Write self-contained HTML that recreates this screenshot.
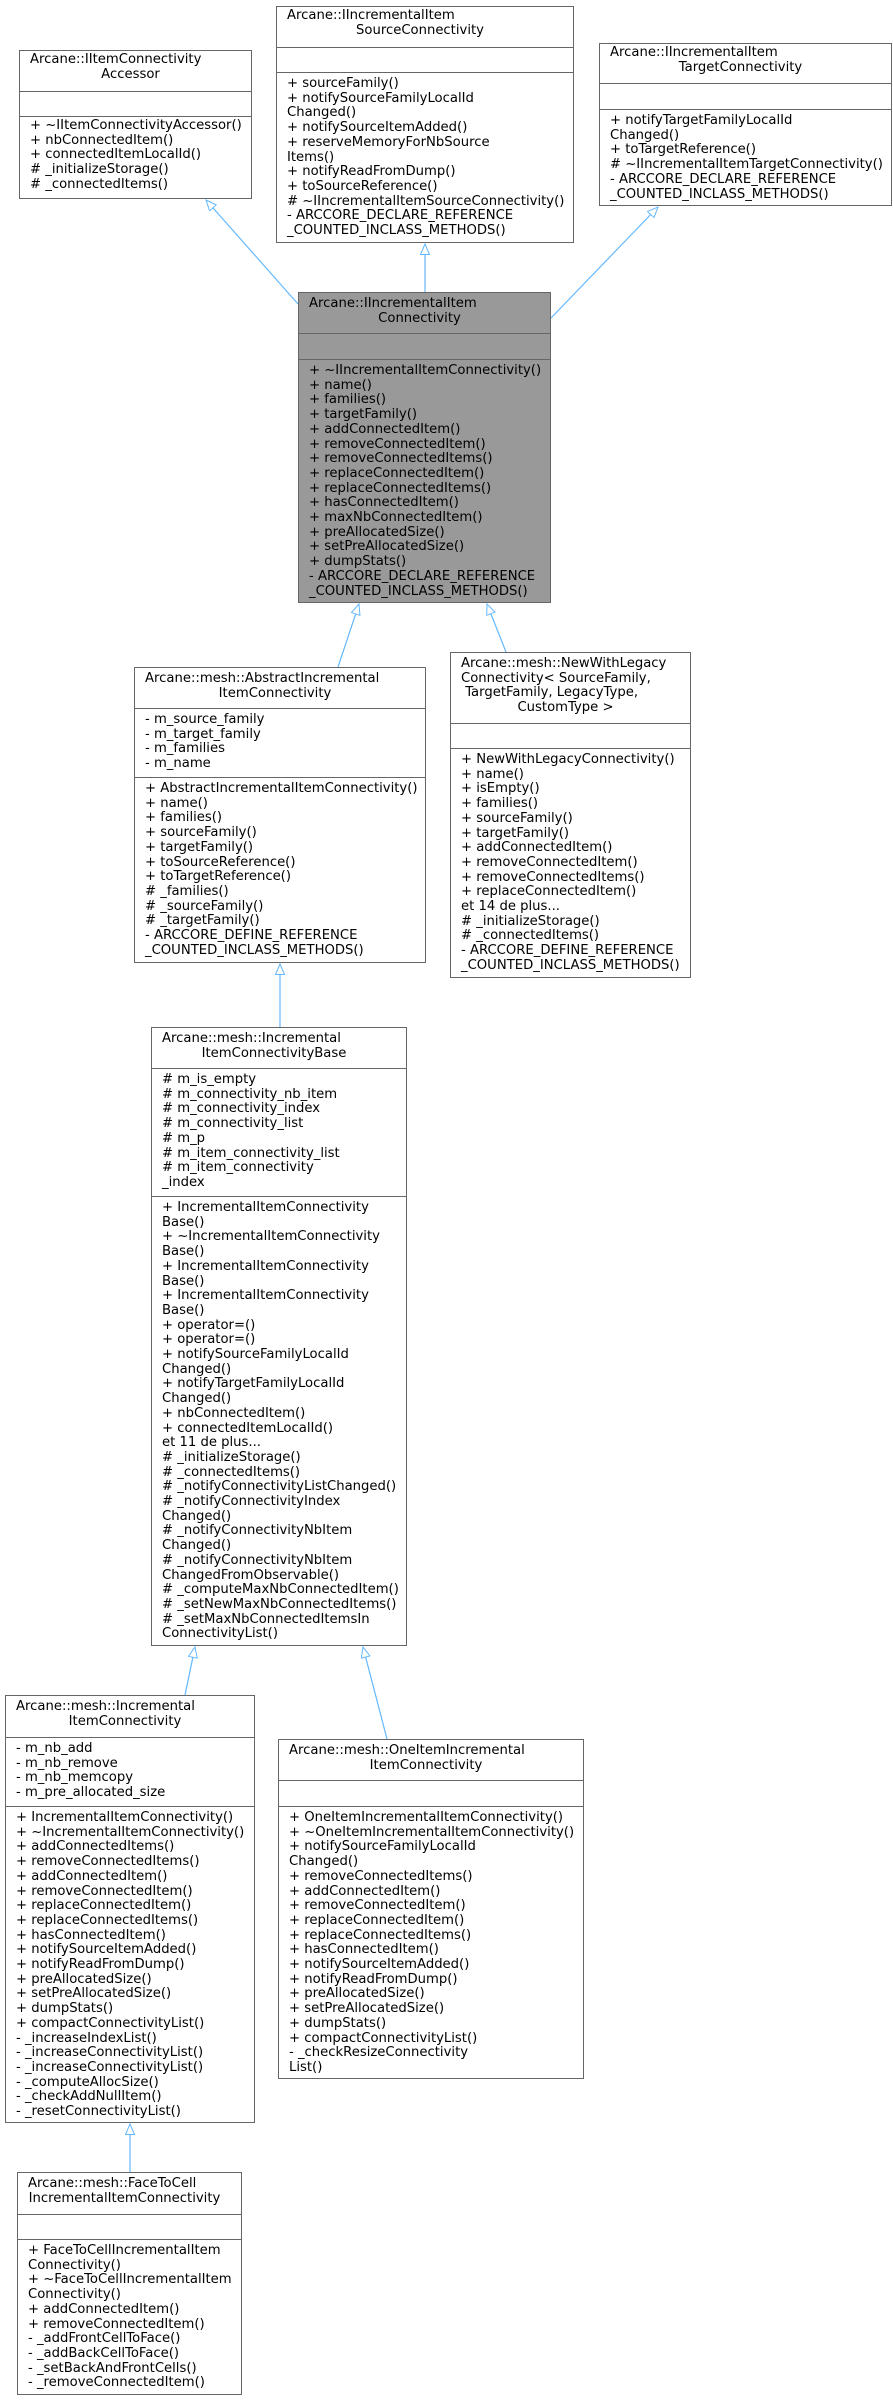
<!DOCTYPE html>
<html><head><meta charset="utf-8"><style>
body{margin:0;background:#fff;width:893px;height:2401px;position:relative;overflow:hidden;font-family:"DejaVu Sans","Liberation Sans",sans-serif;font-size:13.2px;color:#000}
.b{position:absolute;border:1px solid #666;box-sizing:border-box;background:#fff}
.b.g{background:#999}
.c{position:absolute;left:0;right:0;box-sizing:border-box;padding:2px 0 0 10px;line-height:14.7px;white-space:pre}
.c+.c{border-top:1px solid #666}
.ctr{text-align:center;padding-right:10px;margin-left:-10px}
svg{position:absolute;left:0;top:0}
</style></head><body>
<svg width="893" height="2401">
<defs><marker id="a" markerWidth="12" markerHeight="10" refX="11" refY="5" orient="auto" markerUnits="userSpaceOnUse"><path d="M0.5,0.5 L11,5 L0.5,9.5 Z" fill="#fff" stroke="#63b8ff" stroke-width="1"/></marker></defs>
<g stroke="#63b8ff" stroke-width="1.2" fill="none">
<line x1="298" y1="304" x2="206" y2="200" marker-end="url(#a)"/>
<line x1="425" y1="292" x2="425" y2="244" marker-end="url(#a)"/>
<line x1="551" y1="318" x2="658" y2="207" marker-end="url(#a)"/>
<line x1="338" y1="667" x2="359" y2="604" marker-end="url(#a)"/>
<line x1="506" y1="652" x2="487" y2="604" marker-end="url(#a)"/>
<line x1="280" y1="1027" x2="280" y2="964" marker-end="url(#a)"/>
<line x1="185" y1="1695" x2="195" y2="1647" marker-end="url(#a)"/>
<line x1="387" y1="1739" x2="363" y2="1647" marker-end="url(#a)"/>
<line x1="130" y1="2172" x2="130" y2="2124" marker-end="url(#a)"/>
</g></svg>

<div class="b" style="left:19px;top:50px;width:233px;height:149px">
<div class="c" style="top:0;height:40px">Arcane::IItemConnectivity
<div class="ctr">Accessor</div></div>
<div class="c" style="top:40px;height:25px"></div>
<div class="c" style="top:65px;height:84px">+ ~IItemConnectivityAccessor()
+ nbConnectedItem()
+ connectedItemLocalId()
# _initializeStorage()
# _connectedItems()</div>
</div>

<div class="b" style="left:276px;top:6px;width:298px;height:237px">
<div class="c" style="top:0;height:40px">Arcane::IIncrementalItem
<div class="ctr">SourceConnectivity</div></div>
<div class="c" style="top:40px;height:25px"></div>
<div class="c" style="top:65px;height:172px;padding-top:4px">+ sourceFamily()
+ notifySourceFamilyLocalId
Changed()
+ notifySourceItemAdded()
+ reserveMemoryForNbSource
Items()
+ notifyReadFromDump()
+ toSourceReference()
# ~IIncrementalItemSourceConnectivity()
- ARCCORE_DECLARE_REFERENCE
_COUNTED_INCLASS_METHODS()</div>
</div>

<div class="b" style="left:599px;top:43px;width:293px;height:163px">
<div class="c" style="top:0;height:39px">Arcane::IIncrementalItem
<div class="ctr">TargetConnectivity</div></div>
<div class="c" style="top:39px;height:26px"></div>
<div class="c" style="top:65px;height:98px;padding-top:4px">+ notifyTargetFamilyLocalId
Changed()
+ toTargetReference()
# ~IIncrementalItemTargetConnectivity()
- ARCCORE_DECLARE_REFERENCE
_COUNTED_INCLASS_METHODS()</div>
</div>

<div class="b g" style="left:298px;top:292px;width:253px;height:311px">
<div class="c" style="top:0;height:40px;padding-top:4px">Arcane::IIncrementalItem
<div class="ctr">Connectivity</div></div>
<div class="c" style="top:40px;height:26px"></div>
<div class="c" style="top:66px;height:245px;padding-top:4px">+ ~IIncrementalItemConnectivity()
+ name()
+ families()
+ targetFamily()
+ addConnectedItem()
+ removeConnectedItem()
+ removeConnectedItems()
+ replaceConnectedItem()
+ replaceConnectedItems()
+ hasConnectedItem()
+ maxNbConnectedItem()
+ preAllocatedSize()
+ setPreAllocatedSize()
+ dumpStats()
- ARCCORE_DECLARE_REFERENCE
_COUNTED_INCLASS_METHODS()</div>
</div>

<div class="b" style="left:134px;top:667px;width:292px;height:296px">
<div class="c" style="top:0;height:40px;padding-top:4px">Arcane::mesh::AbstractIncremental
<div class="ctr">ItemConnectivity</div></div>
<div class="c" style="top:40px;height:69px;padding-top:4px">- m_source_family
- m_target_family
- m_families
- m_name</div>
<div class="c" style="top:109px;height:187px;padding-top:4px">+ AbstractIncrementalItemConnectivity()
+ name()
+ families()
+ sourceFamily()
+ targetFamily()
+ toSourceReference()
+ toTargetReference()
# _families()
# _sourceFamily()
# _targetFamily()
- ARCCORE_DEFINE_REFERENCE
_COUNTED_INCLASS_METHODS()</div>
</div>

<div class="b" style="left:450px;top:652px;width:241px;height:326px">
<div class="c" style="top:0;height:70px;padding-top:4px">Arcane::mesh::NewWithLegacy
Connectivity&lt; SourceFamily,
 TargetFamily, LegacyType,
<div class="ctr">CustomType &gt;</div></div>
<div class="c" style="top:70px;height:25px"></div>
<div class="c" style="top:95px;height:231px;padding-top:4px">+ NewWithLegacyConnectivity()
+ name()
+ isEmpty()
+ families()
+ sourceFamily()
+ targetFamily()
+ addConnectedItem()
+ removeConnectedItem()
+ removeConnectedItems()
+ replaceConnectedItem()
et 14 de plus...
# _initializeStorage()
# _connectedItems()
- ARCCORE_DEFINE_REFERENCE
_COUNTED_INCLASS_METHODS()</div>
</div>

<div class="b" style="left:151px;top:1027px;width:256px;height:619px">
<div class="c" style="top:0;height:40px;padding-top:4px">Arcane::mesh::Incremental
<div class="ctr">ItemConnectivityBase</div></div>
<div class="c" style="top:40px;height:128px;padding-top:4px"># m_is_empty
# m_connectivity_nb_item
# m_connectivity_index
# m_connectivity_list
# m_p
# m_item_connectivity_list
# m_item_connectivity
_index</div>
<div class="c" style="top:168px;height:451px;padding-top:4px">+ IncrementalItemConnectivity
Base()
+ ~IncrementalItemConnectivity
Base()
+ IncrementalItemConnectivity
Base()
+ IncrementalItemConnectivity
Base()
+ operator=()
+ operator=()
+ notifySourceFamilyLocalId
Changed()
+ notifyTargetFamilyLocalId
Changed()
+ nbConnectedItem()
+ connectedItemLocalId()
et 11 de plus...
# _initializeStorage()
# _connectedItems()
# _notifyConnectivityListChanged()
# _notifyConnectivityIndex
Changed()
# _notifyConnectivityNbItem
Changed()
# _notifyConnectivityNbItem
ChangedFromObservable()
# _computeMaxNbConnectedItem()
# _setNewMaxNbConnectedItems()
# _setMaxNbConnectedItemsIn
ConnectivityList()</div>
</div>

<div class="b" style="left:5px;top:1695px;width:250px;height:428px">
<div class="c" style="top:0;height:41px;padding-top:4px">Arcane::mesh::Incremental
<div class="ctr">ItemConnectivity</div></div>
<div class="c" style="top:41px;height:69px;padding-top:4px">- m_nb_add
- m_nb_remove
- m_nb_memcopy
- m_pre_allocated_size</div>
<div class="c" style="top:110px;height:318px;padding-top:4px">+ IncrementalItemConnectivity()
+ ~IncrementalItemConnectivity()
+ addConnectedItems()
+ removeConnectedItems()
+ addConnectedItem()
+ removeConnectedItem()
+ replaceConnectedItem()
+ replaceConnectedItems()
+ hasConnectedItem()
+ notifySourceItemAdded()
+ notifyReadFromDump()
+ preAllocatedSize()
+ setPreAllocatedSize()
+ dumpStats()
+ compactConnectivityList()
- _increaseIndexList()
- _increaseConnectivityList()
- _increaseConnectivityList()
- _computeAllocSize()
- _checkAddNullItem()
- _resetConnectivityList()</div>
</div>

<div class="b" style="left:278px;top:1739px;width:306px;height:340px">
<div class="c" style="top:0;height:40px;padding-top:4px">Arcane::mesh::OneItemIncremental
<div class="ctr">ItemConnectivity</div></div>
<div class="c" style="top:40px;height:26px"></div>
<div class="c" style="top:66px;height:274px;padding-top:4px">+ OneItemIncrementalItemConnectivity()
+ ~OneItemIncrementalItemConnectivity()
+ notifySourceFamilyLocalId
Changed()
+ removeConnectedItems()
+ addConnectedItem()
+ removeConnectedItem()
+ replaceConnectedItem()
+ replaceConnectedItems()
+ hasConnectedItem()
+ notifySourceItemAdded()
+ notifyReadFromDump()
+ preAllocatedSize()
+ setPreAllocatedSize()
+ dumpStats()
+ compactConnectivityList()
- _checkResizeConnectivity
List()</div>
</div>

<div class="b" style="left:17px;top:2172px;width:225px;height:223px">
<div class="c" style="top:0;height:41px;padding-top:4px">Arcane::mesh::FaceToCell
<div class="ctr">IncrementalItemConnectivity</div></div>
<div class="c" style="top:41px;height:25px"></div>
<div class="c" style="top:66px;height:157px;padding-top:4px">+ FaceToCellIncrementalItem
Connectivity()
+ ~FaceToCellIncrementalItem
Connectivity()
+ addConnectedItem()
+ removeConnectedItem()
- _addFrontCellToFace()
- _addBackCellToFace()
- _setBackAndFrontCells()
- _removeConnectedItem()</div>
</div>
</body></html>
